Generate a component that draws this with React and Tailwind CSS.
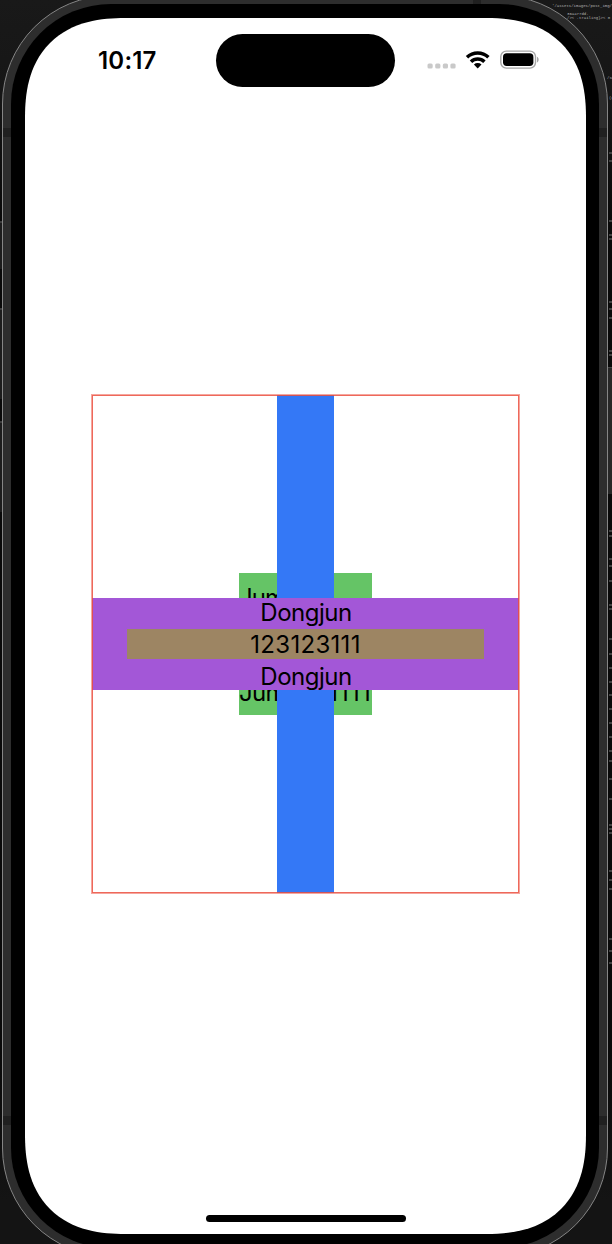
import React from "react";

const codeLines = [
  { x: 552, y: 4, t: "'/assets/images/post_img/swif" },
  { x: 567, y: 12, t: "36aa77dd." },
  { x: 567, y: 16, t: "/>< .trailing}>< 0" },
  { x: 607, y: 76, t: "/swi" },
  { x: 609, y: 96, t: "(Q" },
];

const ticks = [152, 160, 220, 234, 238, 301, 308, 317, 350, 354, 530, 535, 558, 565, 580, 604, 608, 638, 653, 667, 681, 694, 708, 722, 736, 750, 760, 778, 798, 824, 828, 832, 870, 879, 888, 938, 950, 962];

function Backdrop() {
  return (
    <div className="absolute inset-0 overflow-hidden bg-[linear-gradient(to_bottom,#191919_0,#161616_90px,#090909_220px,#090909_1050px,#141414_1200px)]">
      {codeLines.map((l) => (
        <span key={l.y} className="absolute whitespace-pre font-['Liberation_Mono',monospace] text-[4px] leading-[5px] text-[#b0b0b0]" style={{ left: l.x, top: l.y }}>
          {l.t}
        </span>
      ))}
      {ticks.map((y) => (
        <div key={y} className="absolute left-[609px] h-[2px] w-[3px] bg-[#404040]" style={{ top: y }} />
      ))}
      <div className="absolute left-0 top-[221px] h-[48px] w-[3px] border-t-2 border-[#3c3c3c] bg-[#1c1c1c]" />
      <div className="absolute left-0 top-[308px] h-[91px] w-[3px] border-t-2 border-[#3c3c3c] bg-[#1c1c1c]" />
      <div className="absolute left-0 top-[421px] h-[91px] w-[3px] border-t-2 border-[#3c3c3c] bg-[#1c1c1c]" />
      <div className="absolute left-[608px] top-[367px] h-[127px] w-[4px] border-t border-[#444] bg-[#272727]" />
    </div>
  );
}

function AntennaBands() {
  return (
    <>
      <div className="absolute left-0 top-[132px] h-[9px] w-2 bg-[#202020]" />
      <div className="absolute right-0 top-[132px] h-[9px] w-2 bg-[#202020]" />
      <div className="absolute left-0 top-[1120px] h-[9px] w-2 bg-[#202020]" />
      <div className="absolute right-0 top-[1120px] h-[9px] w-2 bg-[#202020]" />
      <div className="absolute left-[470px] top-0 h-2 w-[8px] bg-[#202020]" />
    </>
  );
}

function StatusBar() {
  return (
    <div className="flex h-[68px] items-start pt-4">
      <div className="flex h-[54px] w-[191px] items-center pl-[73px] text-[24px] font-semibold leading-none tracking-[0.2px]">10:17</div>
      <div className="h-[53px] w-[179px] rounded-full bg-black" />
      <svg className="ml-8 mt-[15px]" width="114" height="22" viewBox="0 0 114 22">
        <g fill="#c9c9c9">
          <rect x="0.5" y="14.5" width="5.2" height="5" rx="1.5" />
          <rect x="8.2" y="14.5" width="5.2" height="5" rx="1.5" />
          <rect x="15.8" y="14.5" width="5.2" height="5" rx="1.5" />
          <rect x="23.4" y="14.5" width="5.2" height="5" rx="1.5" />
        </g>
        <g fill="none" stroke="#000" strokeWidth="3.5">
          <path d="M40 8.2A15.6 15.6 0 0 1 61.4 8.2" />
          <path d="M44 12.7A9.6 9.6 0 0 1 57.4 12.7" />
        </g>
        <path d="M46.9 15.6a5.6 5.6 0 0 1 7.6 0L50.7 19.6Z" fill="#000" />
        <rect x="73.8" y="2.1" width="34.7" height="17" rx="5.5" fill="none" stroke="#a6a6a6" strokeWidth="1.4" />
        <rect x="76" y="4.2" width="30.4" height="12.8" rx="3.7" fill="#000" />
        <path d="M110 7.8c2.2.9 2.2 4.8 0 5.6Z" fill="#a6a6a6" />
      </svg>
    </div>
  );
}

function Stack() {
  return (
    <div className="ml-[66px] mt-[308px] grid h-[500px] w-[429px] place-items-center text-[24px] leading-[29px] tracking-[-0.5px]">
      <div className="flex h-[142px] w-[133px] flex-col justify-between bg-[#65c466] pb-[8px] pt-[10px] [grid-area:1/1]">
        <div className="ml-[6px] self-start tracking-[-0.9px]"><span className="-ml-[6px]">Jumoon</span></div>
        <div className="flex justify-between whitespace-nowrap tracking-[-0.7px]">
          <span>Jumoon</span>
          <span className="tracking-[1.2px]">1111</span>
        </div>
      </div>
      <div className="h-[498px] w-[57px] bg-[#3478f6] [grid-area:1/1]" />
      <div className="flex h-[92px] w-[427px] flex-col items-center bg-[#a357d7] [grid-area:1/1]">
        <div className="h-[31px] pl-px">Dongjun</div>
        <div className="h-[30px] w-[357px] bg-[#9d8563] pt-px text-center tracking-[0.3px]">123123111</div>
        <div className="h-[31px] pl-px pt-[3px]">Dongjun</div>
      </div>
      <div className="h-full w-full border border-[#eb4e3d]/50 [grid-area:1/1]">
        <div className="h-full w-full border border-[#eb4e3d]/85" />
      </div>
    </div>
  );
}

export default function App() {
  return (
    <div className="relative h-[1244px] w-[612px] overflow-hidden font-[Inter,sans-serif] text-black">
      <Backdrop />
      <div className="relative -mt-[5px] ml-[2px] h-[1262px] w-[606px] rounded-[109px] border border-[#858585] bg-[#2d2d2d] p-2">
        <AntennaBands />
        <div className="h-full rounded-[100px] bg-black p-[14px]">
          <div className="flex h-[1216px] w-[561px] flex-col rounded-[86px] bg-white supports-[corner-shape:round]:rounded-[100px] supports-[corner-shape:round]:[corner-shape:superellipse(1.27)]">
            <StatusBar />
            <Stack />
            <div className="mx-auto mb-3 mt-auto h-[7px] w-[200px] rounded-full bg-black" />
          </div>
        </div>
      </div>
    </div>
  );
}
